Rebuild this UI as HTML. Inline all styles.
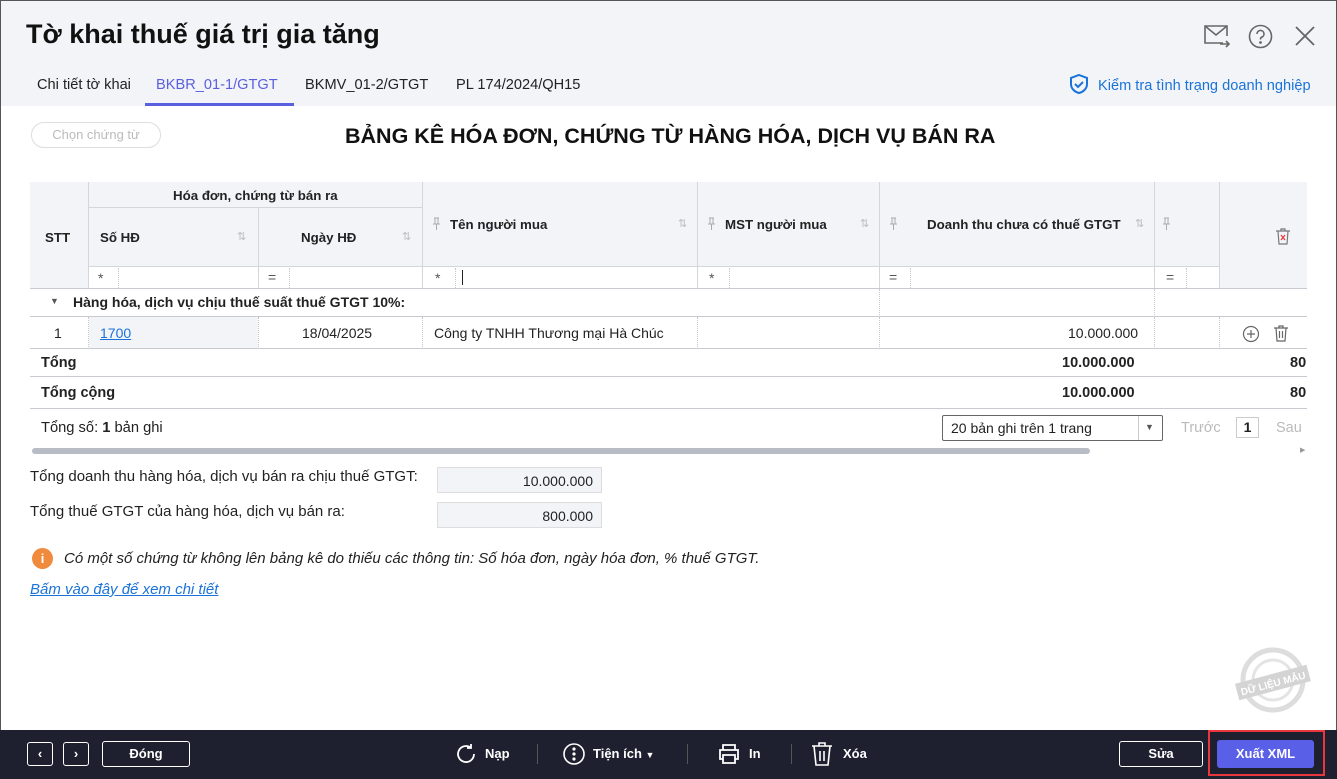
<!DOCTYPE html>
<html><head><meta charset="utf-8"><style>
*{box-sizing:border-box;margin:0;padding:0}
body{width:1337px;height:779px;overflow:hidden;font-family:"Liberation Sans",sans-serif;font-size:14px;color:#222;background:#fff;position:relative}
.a{position:absolute}
.win{left:0;top:0;width:1337px;height:779px;border:1px solid #555;border-bottom:none}
.hdr{left:1px;top:1px;width:1335px;height:105px;background:#f3f4f8}
.b{font-weight:bold}
.th{background:#f3f4f8}
.vl{border-left:1px solid #d4d6dc}
.hl{border-top:1px solid #d4d6dc}
.dl{border-left:1px dotted #c8c8c8}
.foot{left:0;top:730px;width:1337px;height:49px;background:#1e2030}
.btn{border:1px solid #fff;border-radius:3px;color:#fff;font-weight:bold;text-align:center;font-size:13px}
.ft{color:#fff;font-weight:bold;font-size:13px}
.sort{color:#bbb;font-size:11px}
.h{font-size:13.3px;font-weight:bold}
</style></head><body>
<div class="a hdr"></div>
<div class="a win"></div>
<div class="a b" style="left:26px;top:19px;font-size:27px;color:#111">Tờ khai thuế giá trị gia tăng</div>
<svg class="a" style="left:1203px;top:24px" width="28" height="24" viewBox="0 0 28 24" fill="none" stroke="#666" stroke-width="1.6"><path d="M20 19H2V2h22v10M2 2l11 9 11-9M17 20h9M23 17l3 3-3 3"/></svg>
<svg class="a" style="left:1248px;top:24px" width="25" height="25" viewBox="0 0 25 25" fill="none" stroke="#666" stroke-width="1.6"><circle cx="12.5" cy="12.5" r="11"/><path d="M9 10a3.5 3.5 0 1 1 4.5 3.3c-1 .4-1 1-1 2.2"/><circle cx="12.5" cy="18.5" r=".6" fill="#666"/></svg>
<svg class="a" style="left:1295px;top:26px" width="20" height="20" viewBox="0 0 20 20" stroke="#666" stroke-width="1.8"><path d="M1 1l18 18M19 1L1 19"/></svg>
<div class="a" style="left:37px;top:77px;font-size:14.6px">Chi tiết tờ khai</div>
<div class="a" style="left:156px;top:77px;font-size:14.6px;color:#5a5fe0">BKBR_01-1/GTGT</div>
<div class="a" style="left:145px;top:103px;width:149px;height:3px;background:#5a5fe0"></div>
<div class="a" style="left:305px;top:77px;font-size:14.6px">BKMV_01-2/GTGT</div>
<div class="a" style="left:456px;top:77px;font-size:14.6px">PL 174/2024/QH15</div>
<svg class="a" style="left:1068px;top:73px" width="22" height="22" viewBox="0 0 22 22" fill="none" stroke="#1a73d9" stroke-width="2"><path d="M11 2l8 3v6c0 5-4 8-8 9-4-1-8-4-8-9V5z"/><path d="M7 11l3 3 5-5"/></svg>
<div class="a" style="left:1098px;top:78px;font-size:14.6px;color:#1a73d9">Kiểm tra tình trạng doanh nghiệp</div>

<div class="a" style="left:31px;top:122px;width:130px;height:26px;border:1px solid #ddd;border-radius:13px;color:#bbb;text-align:center;line-height:24px;font-size:13px">Chọn chứng từ</div>
<div class="a b" style="left:345px;top:124px;font-size:21.5px;color:#111">BẢNG KÊ HÓA ĐƠN, CHỨNG TỪ HÀNG HÓA, DỊCH VỤ BÁN RA</div>

<div class="a th" style="left:30px;top:182px;width:1277px;height:107px"></div>
<div class="a" style="left:88px;top:266px;width:1131px;height:23px;background:#fff;border-top:1px solid #d4d6dc"></div>
<div class="a vl" style="left:88px;top:182px;height:107px"></div>
<div class="a vl" style="left:258px;top:208px;height:81px"></div>
<div class="a vl" style="left:422px;top:182px;height:107px"></div>
<div class="a vl" style="left:697px;top:182px;height:107px"></div>
<div class="a vl" style="left:879px;top:182px;height:107px"></div>
<div class="a vl" style="left:1154px;top:182px;height:107px"></div>
<div class="a vl" style="left:1219px;top:182px;height:107px"></div>
<div class="a hl" style="left:88px;top:207px;width:334px"></div>
<div class="a h" style="left:45px;top:230px">STT</div>
<div class="a h" style="left:173px;top:188px">Hóa đơn, chứng từ bán ra</div>
<div class="a h" style="left:100px;top:230px">Số HĐ</div><div class="a sort" style="left:237px;top:230px">⇅</div>
<div class="a h" style="left:301px;top:230px">Ngày HĐ</div><div class="a sort" style="left:402px;top:230px">⇅</div>
<svg class="a" style="left:432px;top:217px" width="9" height="14" viewBox="0 0 9 14" fill="none" stroke="#aaa" stroke-width="1"><path d="M2 1h5M3 1v6M6 1v6M1 7h7M4.5 7v6"/></svg>
<div class="a h" style="left:450px;top:217px">Tên người mua</div><div class="a sort" style="left:678px;top:217px">⇅</div>
<svg class="a" style="left:707px;top:217px" width="9" height="14" viewBox="0 0 9 14" fill="none" stroke="#aaa" stroke-width="1"><path d="M2 1h5M3 1v6M6 1v6M1 7h7M4.5 7v6"/></svg>
<div class="a h" style="left:725px;top:217px">MST người mua</div><div class="a sort" style="left:860px;top:217px">⇅</div>
<svg class="a" style="left:889px;top:217px" width="9" height="14" viewBox="0 0 9 14" fill="none" stroke="#aaa" stroke-width="1"><path d="M2 1h5M3 1v6M6 1v6M1 7h7M4.5 7v6"/></svg>
<div class="a h" style="left:927px;top:217px">Doanh thu chưa có thuế GTGT</div><div class="a sort" style="left:1135px;top:217px">⇅</div>
<svg class="a" style="left:1162px;top:217px" width="9" height="14" viewBox="0 0 9 14" fill="none" stroke="#aaa" stroke-width="1"><path d="M2 1h5M3 1v6M6 1v6M1 7h7M4.5 7v6"/></svg>
<svg class="a" style="left:1275px;top:227px" width="16" height="18" viewBox="0 0 16 18" fill="none" stroke="#777" stroke-width="1.2"><path d="M1 4h14M6 4V2h4v2M3 4l1 13h8l1-13"/><path d="M6 8l4 5M10 8l-4 5" stroke="#e33"/></svg>
<div class="a" style="left:98px;top:270px;color:#555">*</div><div class="a dl" style="left:118px;top:268px;height:20px"></div>
<div class="a" style="left:268px;top:269px;color:#555">=</div><div class="a dl" style="left:289px;top:268px;height:20px"></div>
<div class="a" style="left:435px;top:270px;color:#555">*</div><div class="a dl" style="left:455px;top:268px;height:20px"></div><div class="a" style="left:462px;top:270px;width:1px;height:15px;background:#222"></div>
<div class="a" style="left:709px;top:270px;color:#555">*</div><div class="a dl" style="left:729px;top:268px;height:20px"></div>
<div class="a" style="left:889px;top:269px;color:#555">=</div><div class="a dl" style="left:910px;top:268px;height:20px"></div>
<div class="a" style="left:1166px;top:269px;color:#555">=</div><div class="a dl" style="left:1186px;top:268px;height:20px"></div>
<div class="a hl" style="left:30px;top:288px;width:1277px;border-color:#c8cad0"></div>
<div class="a" style="left:50px;top:296px;font-size:9px;color:#555">▼</div>
<div class="a b" style="left:73px;top:294px;font-size:14px">Hàng hóa, dịch vụ chịu thuế suất thuế GTGT 10%:</div>
<div class="a dl" style="left:879px;top:289px;height:28px"></div><div class="a dl" style="left:1154px;top:289px;height:28px"></div>
<div class="a hl" style="left:30px;top:316px;width:1277px;border-color:#c8cad0"></div>
<div class="a" style="left:89px;top:317px;width:169px;height:32px;background:#f3f4f8"></div>
<div class="a dl" style="left:88px;top:317px;height:32px"></div><div class="a dl" style="left:258px;top:317px;height:32px"></div><div class="a dl" style="left:422px;top:317px;height:32px"></div><div class="a dl" style="left:697px;top:317px;height:32px"></div><div class="a dl" style="left:879px;top:317px;height:32px"></div><div class="a dl" style="left:1154px;top:317px;height:32px"></div><div class="a dl" style="left:1219px;top:317px;height:32px"></div>
<div class="a" style="left:54px;top:325px">1</div>
<div class="a" style="left:100px;top:325px;color:#1a73d9;text-decoration:underline">1700</div>
<div class="a" style="left:302px;top:325px">18/04/2025</div>
<div class="a" style="left:434px;top:325px">Công ty TNHH Thương mại Hà Chúc</div>
<div class="a" style="left:1068px;top:325px">10.000.000</div>
<svg class="a" style="left:1242px;top:325px" width="18" height="18" viewBox="0 0 18 18" fill="none" stroke="#666" stroke-width="1.2"><circle cx="9" cy="9" r="7.5"/><path d="M9 5v8M5 9h8"/></svg>
<svg class="a" style="left:1273px;top:324px" width="16" height="18" viewBox="0 0 16 18" fill="none" stroke="#666" stroke-width="1.2"><path d="M1 4h14M6 4V2h4v2M3 4l1 13h8l1-13M6.5 7v7M9.5 7v7"/></svg>
<div class="a hl" style="left:30px;top:348px;width:1277px;border-color:#c8cad0"></div>
<div class="a b" style="left:41px;top:355px;font-size:14.5px">Tổng</div>
<div class="a b" style="left:1062px;top:355px;font-size:14.5px">10.000.000</div>
<div class="a b" style="left:1290px;top:355px;font-size:14.5px">80</div>
<div class="a hl" style="left:30px;top:376px;width:1277px;border-color:#c8cad0"></div>
<div class="a b" style="left:41px;top:385px;font-size:14.5px">Tổng cộng</div>
<div class="a b" style="left:1062px;top:385px;font-size:14.5px">10.000.000</div>
<div class="a b" style="left:1290px;top:385px;font-size:14.5px">80</div>
<div class="a hl" style="left:30px;top:408px;width:1277px;border-color:#c8cad0"></div>
<div class="a" style="left:41px;top:420px;font-size:14.7px">Tổng số: <b>1</b> bản ghi</div>
<div class="a" style="left:942px;top:415px;width:221px;height:26px;border:1px solid #666;border-radius:2px"></div>
<div class="a" style="left:951px;top:420px;font-size:14px">20 bản ghi trên 1 trang</div>
<div class="a" style="left:1138px;top:416px;height:24px;border-left:1px solid #ccc"></div>
<div class="a" style="left:1145px;top:422px;font-size:9px;color:#555">▼</div>
<div class="a" style="left:1181px;top:420px;color:#bbb;font-size:14.5px">Trước</div>
<div class="a b" style="left:1236px;top:417px;width:23px;height:21px;border:1px solid #ccc;text-align:center;line-height:19px;font-size:14px">1</div>
<div class="a" style="left:1276px;top:420px;color:#bbb;font-size:14.5px">Sau</div>
<div class="a" style="left:32px;top:448px;width:1058px;height:6px;background:#b8bcc4;border-radius:3px"></div>
<div class="a" style="left:1300px;top:446px;font-size:7px;color:#999">▶</div>

<div class="a" style="left:30px;top:468px;font-size:15px">Tổng doanh thu hàng hóa, dịch vụ bán ra chịu thuế GTGT:</div>
<div class="a" style="left:437px;top:467px;width:165px;height:26px;background:#f3f4f8;border:1px solid #ddd;text-align:right;padding:5px 8px 0 0;font-size:14px">10.000.000</div>
<div class="a" style="left:30px;top:503px;font-size:15px">Tổng thuế GTGT của hàng hóa, dịch vụ bán ra:</div>
<div class="a" style="left:437px;top:502px;width:165px;height:26px;background:#f3f4f8;border:1px solid #ddd;text-align:right;padding:5px 8px 0 0;font-size:14px">800.000</div>
<div class="a b" style="left:32px;top:548px;width:21px;height:21px;border-radius:50%;background:#f08a3c;color:#fff;text-align:center;line-height:21px;font-size:13px">i</div>
<div class="a" style="left:64px;top:550px;font-style:italic;font-size:15px">Có một số chứng từ không lên bảng kê do thiếu các thông tin: Số hóa đơn, ngày hóa đơn, % thuế GTGT.</div>
<div class="a" style="left:30px;top:581px;font-style:italic;color:#1a73d9;text-decoration:underline;font-size:15px">Bấm vào đây để xem chi tiết</div>

<svg class="a" style="left:1228px;top:645px" width="90" height="70" viewBox="0 0 90 70"><circle cx="45" cy="35" r="30" fill="none" stroke="#ddd" stroke-width="5"/><circle cx="45" cy="35" r="20" fill="none" stroke="#e4e4e4" stroke-width="3"/><g transform="rotate(-15 45 38)"><rect x="8" y="29" width="74" height="17" fill="#d4d4d4"/><text x="45" y="42" text-anchor="middle" font-family="Liberation Sans" font-weight="bold" font-size="10" fill="#fff">DỮ LIỆU MẪU</text></g></svg>

<div class="a foot"></div>
<div class="a btn" style="left:27px;top:742px;width:26px;height:24px;line-height:21px">‹</div>
<div class="a btn" style="left:63px;top:742px;width:26px;height:24px;line-height:21px">›</div>
<div class="a btn" style="left:102px;top:741px;width:88px;height:26px;line-height:24px">Đóng</div>
<svg class="a" style="left:454px;top:742px" width="24" height="24" viewBox="0 0 24 24" fill="none" stroke="#fff" stroke-width="1.8"><path d="M20 12a8 8 0 1 1-3-6.2M17 2v4h-4"/></svg>
<div class="a ft" style="left:485px;top:746px">Nạp</div>
<div class="a" style="left:537px;top:744px;height:20px;border-left:1px solid #555"></div>
<svg class="a" style="left:562px;top:742px" width="24" height="24" viewBox="0 0 24 24" fill="none" stroke="#fff" stroke-width="1.6"><circle cx="12" cy="12" r="10"/><circle cx="12" cy="7" r=".8" fill="#fff"/><circle cx="12" cy="12" r=".8" fill="#fff"/><circle cx="12" cy="17" r=".8" fill="#fff"/></svg>
<div class="a ft" style="left:593px;top:746px">Tiện ích <span style="font-size:9px">▼</span></div>
<div class="a" style="left:687px;top:744px;height:20px;border-left:1px solid #555"></div>
<svg class="a" style="left:717px;top:742px" width="24" height="24" viewBox="0 0 24 24" fill="none" stroke="#fff" stroke-width="1.8"><path d="M6 8V3h12v5M6 17H3V8h18v9h-3M6 13h12v8H6z"/></svg>
<div class="a ft" style="left:749px;top:746px">In</div>
<div class="a" style="left:791px;top:744px;height:20px;border-left:1px solid #555"></div>
<svg class="a" style="left:810px;top:741px" width="24" height="26" viewBox="0 0 24 26" fill="none" stroke="#fff" stroke-width="1.6"><path d="M2 5h20M9 5V2h6v3M4 5l2 19h12l2-19M10 10v10M14 10v10"/></svg>
<div class="a ft" style="left:843px;top:746px">Xóa</div>
<div class="a btn" style="left:1119px;top:741px;width:84px;height:26px;line-height:24px">Sửa</div>
<div class="a" style="left:1208px;top:730px;width:117px;height:46px;border:2px solid #e8383d"></div>
<div class="a ft" style="left:1217px;top:740px;width:97px;height:28px;background:#5a5fe8;border-radius:3px;text-align:center;line-height:28px">Xuất XML</div>
</body></html>
